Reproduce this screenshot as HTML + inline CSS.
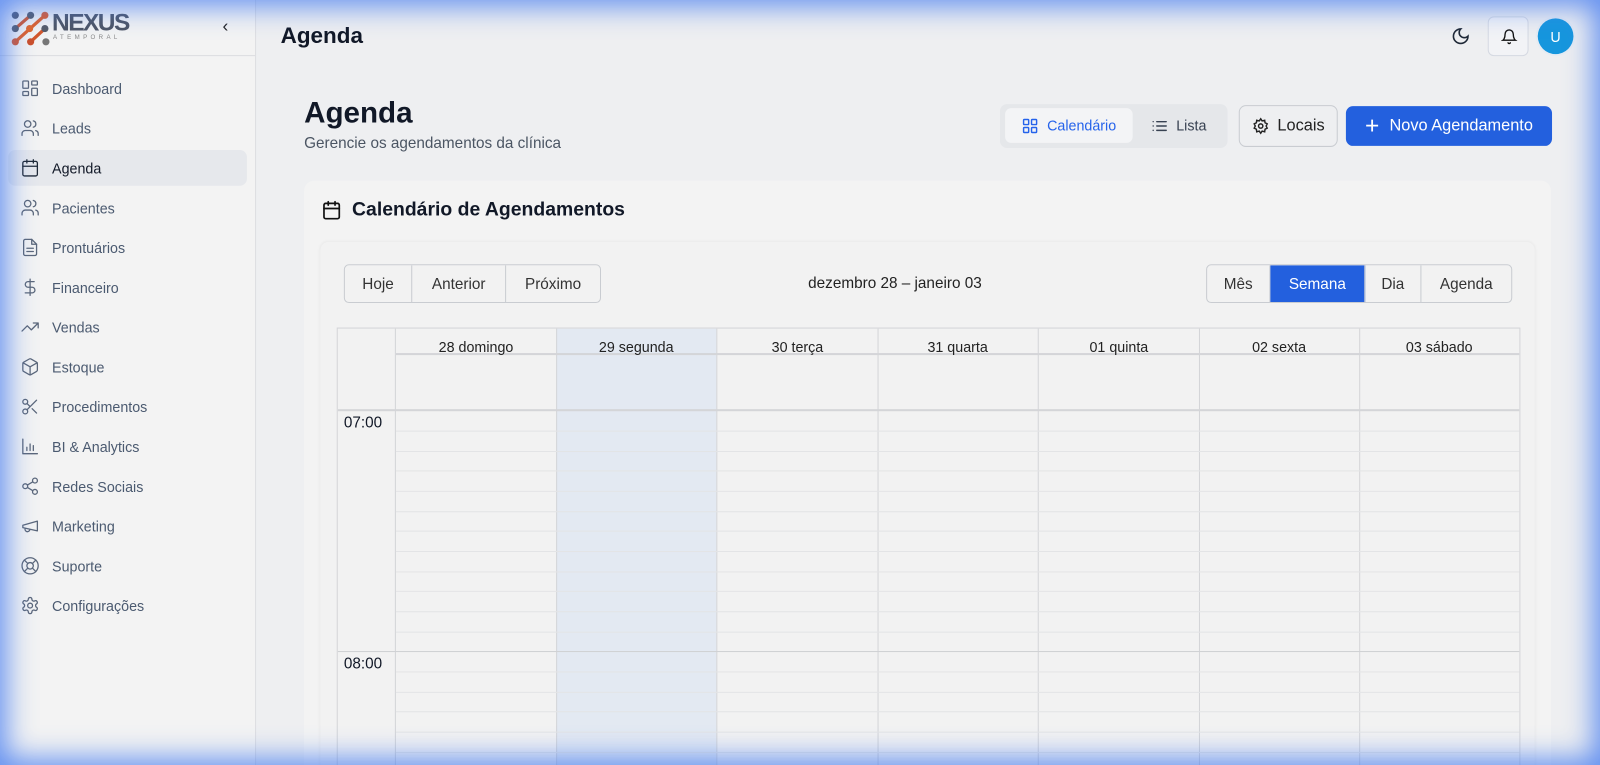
<!DOCTYPE html>
<html><head><meta charset="utf-8"><style>
*{box-sizing:border-box;margin:0;padding:0}
html{width:1600px;height:765px;overflow:hidden}
body{width:1600px;height:765px;overflow:hidden;font-family:"Liberation Sans",sans-serif;background:#eeeff1;position:relative;color:#111827}
#clip{position:absolute;left:0;top:0;width:1600px;height:765px;overflow:hidden}
#w{position:absolute;left:0;top:0;width:1568px;height:750px;transform:scale(1.0204);transform-origin:0 0;overflow:hidden}
.glow{position:absolute;inset:0;pointer-events:none;box-shadow:inset 0 0 28px 6px rgba(70,125,240,.85);z-index:50}
.sb{position:absolute;left:0;top:0;width:251px;height:750px;background:#f3f3f3;border-right:1px solid #dcdde0}
.logo{height:55px;border-bottom:1px solid #dcdde0;position:relative}
.nav{padding-top:14px}
.it{height:35px;margin:0 8px 4px;display:flex;align-items:center;padding-left:12px;font-size:14px;color:#4b5a70;border-radius:7px}
.it svg{width:19px;height:19px;margin-right:12px;stroke:#5b677a;fill:none;stroke-width:1.6;stroke-linecap:round;stroke-linejoin:round}
.it.on{background:#e6e8ec;color:#111827}
.it.on svg{stroke:#1f2937}
.top{position:absolute;left:251px;right:0;top:0;height:70px}
.btn{display:flex;align-items:center;justify-content:center}
.card{position:absolute;left:298px;top:177px;width:1222px;height:600px;background:#f3f3f3;border-radius:10px}
.inner{position:absolute;left:314px;top:237px;width:1190px;height:540px;background:#f2f2f2;border-radius:8px;box-shadow:0 0 3px rgba(0,0,0,.06)}
.grp{position:absolute;display:flex;border:1px solid #c9ccd1;border-radius:5px;overflow:hidden;height:38px;font-size:15px;color:#333}
.grp div{display:flex;align-items:center;justify-content:center;border-right:1px solid #c9ccd1}
.grp div:last-child{border-right:none}
.grid{position:absolute;left:330px;top:321px;width:1160px;height:460px;border:1px solid #d4d5d8;overflow:hidden}
.v{position:absolute;top:0;bottom:0;width:1px;background:#d4d5d8}
.h{position:absolute;left:57px;right:0;height:1px;background:#e3e4e6}
.hd{position:absolute;top:10px;font-size:14px;text-align:center;width:157px;color:#222}
</style></head><body>
<div id="clip">
<div id="w">
<div class="sb">
 <div class="logo">
  <svg width="40" height="36" style="position:absolute;left:10px;top:10px" viewBox="0 0 40 36"><g stroke-width="3.2" stroke-linecap="round"><line x1="20" y1="5" x2="5" y2="18" stroke="#d4562a"/><line x1="34" y1="5" x2="5" y2="31" stroke="#e0602a"/><line x1="34" y1="18" x2="20" y2="31" stroke="#d4562a"/></g><circle cx="5" cy="5" r="3.5" fill="#4f5563"/><circle cx="20" cy="5" r="3.5" fill="#555b67"/><circle cx="34" cy="5" r="3.5" fill="#e05a28"/><circle cx="5" cy="18" r="3.5" fill="#555b67"/><circle cx="19" cy="18" r="3.5" fill="#e3672a"/><circle cx="34" cy="18" r="3.5" fill="#555b67"/><circle cx="5" cy="31" r="3.5" fill="#d9552a"/><circle cx="20" cy="31" r="3.5" fill="#cc4f2a"/><circle cx="35" cy="31" r="3.5" fill="#777"/></svg>
  <div style="position:absolute;left:51px;top:9px;font-size:24px;font-weight:bold;color:#4e5564;letter-spacing:-1.5px">NEXUS</div>
  <div style="position:absolute;left:52px;top:34px;font-size:6px;color:#888;letter-spacing:3.3px">ATEMPORAL</div>
  <div style="position:absolute;left:218px;top:16px;font-size:17px;color:#222">‹</div>
 </div>
 <div class="nav">
  <div class="it"><svg viewBox="0 0 24 24"><rect x="3" y="3" width="7" height="9" rx="1"/><rect x="14" y="3" width="7" height="5" rx="1"/><rect x="14" y="12" width="7" height="9" rx="1"/><rect x="3" y="16" width="7" height="5" rx="1"/></svg>Dashboard</div>
  <div class="it"><svg viewBox="0 0 24 24"><path d="M16 21v-2a4 4 0 0 0-4-4H6a4 4 0 0 0-4 4v2"/><circle cx="9" cy="7" r="4"/><path d="M22 21v-2a4 4 0 0 0-3-3.9M16 3.1a4 4 0 0 1 0 7.8"/></svg>Leads</div>
  <div class="it on"><svg viewBox="0 0 24 24"><rect x="3" y="4" width="18" height="18" rx="2"/><path d="M16 2v4M8 2v4M3 10h18"/></svg>Agenda</div>
  <div class="it"><svg viewBox="0 0 24 24"><path d="M16 21v-2a4 4 0 0 0-4-4H6a4 4 0 0 0-4 4v2"/><circle cx="9" cy="7" r="4"/><path d="M22 21v-2a4 4 0 0 0-3-3.9M16 3.1a4 4 0 0 1 0 7.8"/></svg>Pacientes</div>
  <div class="it"><svg viewBox="0 0 24 24"><path d="M14 2H6a2 2 0 0 0-2 2v16a2 2 0 0 0 2 2h12a2 2 0 0 0 2-2V8z"/><path d="M14 2v6h6M16 13H8M16 17H8"/></svg>Prontuários</div>
  <div class="it"><svg viewBox="0 0 24 24"><path d="M12 2v20M17 5H9.5a3.5 3.5 0 0 0 0 7h5a3.5 3.5 0 0 1 0 7H6"/></svg>Financeiro</div>
  <div class="it"><svg viewBox="0 0 24 24"><path d="M22 7l-8.5 8.5-5-5L2 17M16 7h6v6"/></svg>Vendas</div>
  <div class="it"><svg viewBox="0 0 24 24"><path d="M21 16V8a2 2 0 0 0-1-1.7l-7-4a2 2 0 0 0-2 0l-7 4A2 2 0 0 0 3 8v8a2 2 0 0 0 1 1.7l7 4a2 2 0 0 0 2 0l7-4a2 2 0 0 0 1-1.7z"/><path d="M3.3 7L12 12l8.7-5M12 22V12"/></svg>Estoque</div>
  <div class="it"><svg viewBox="0 0 24 24"><circle cx="6" cy="6" r="3"/><circle cx="6" cy="18" r="3"/><path d="M20 4L8.1 15.9M14.5 14.5L20 20M8.1 8.1L12 12"/></svg>Procedimentos</div>
  <div class="it"><svg viewBox="0 0 24 24"><path d="M3 3v18h18M8 17v-4M12 17V9M16 17v-6"/></svg>BI &amp; Analytics</div>
  <div class="it"><svg viewBox="0 0 24 24"><circle cx="18" cy="5" r="3"/><circle cx="6" cy="12" r="3"/><circle cx="18" cy="19" r="3"/><path d="M8.6 13.5l6.8 4M15.4 6.5l-6.8 4"/></svg>Redes Sociais</div>
  <div class="it"><svg viewBox="0 0 24 24"><path d="M3 11l18-5v12L3 14v-3zM11.6 16.8a3 3 0 1 1-5.8-1.6"/></svg>Marketing</div>
  <div class="it"><svg viewBox="0 0 24 24"><circle cx="12" cy="12" r="10"/><circle cx="12" cy="12" r="4"/><path d="M4.9 4.9l4.3 4.3M14.8 14.8l4.3 4.3M14.8 9.2l4.3-4.3M4.9 19.1l4.3-4.3"/></svg>Suporte</div>
  <div class="it"><svg viewBox="0 0 24 24"><circle cx="12" cy="12" r="3"/><path d="M12.2 2h-.4a2 2 0 0 0-2 2v.2a2 2 0 0 1-1 1.7l-.4.3a2 2 0 0 1-2 0l-.2-.1a2 2 0 0 0-2.7.7l-.2.4a2 2 0 0 0 .7 2.7l.2.1a2 2 0 0 1 1 1.7v.5a2 2 0 0 1-1 1.7l-.2.1a2 2 0 0 0-.7 2.7l.2.4a2 2 0 0 0 2.7.7l.2-.1a2 2 0 0 1 2 0l.4.3a2 2 0 0 1 1 1.7v.2a2 2 0 0 0 2 2h.4a2 2 0 0 0 2-2v-.2a2 2 0 0 1 1-1.7l.4-.3a2 2 0 0 1 2 0l.2.1a2 2 0 0 0 2.7-.7l.2-.4a2 2 0 0 0-.7-2.7l-.2-.1a2 2 0 0 1-1-1.7v-.5a2 2 0 0 1 1-1.7l.2-.1a2 2 0 0 0 .7-2.7l-.2-.4a2 2 0 0 0-2.7-.7l-.2.1a2 2 0 0 1-2 0l-.4-.3a2 2 0 0 1-1-1.7V4a2 2 0 0 0-2-2z"/></svg>Configurações</div>
 </div>
</div>
<div class="top">
 <div style="position:absolute;left:24px;top:22px;font-size:22px;font-weight:bold">Agenda</div>
 <svg style="position:absolute;left:1171px;top:26px" width="19" height="19" viewBox="0 0 24 24" fill="none" stroke="#1f2937" stroke-width="2" stroke-linecap="round"><path d="M12 3a6 6 0 0 0 9 9 9 9 0 1 1-9-9z"/></svg>
 <div style="position:absolute;left:1207px;top:16px;width:40px;height:39px;border:1px solid #d5d9e2;border-radius:6px;background:#f2f3f6"><svg style="position:absolute;left:12px;top:11px" width="16" height="16" viewBox="0 0 24 24" fill="none" stroke="#111" stroke-width="2" stroke-linecap="round"><path d="M6 8a6 6 0 0 1 12 0c0 7 3 9 3 9H3s3-2 3-9M10.3 21a1.9 1.9 0 0 0 3.4 0"/></svg></div>
 <div style="position:absolute;left:1256px;top:18px;width:35px;height:35px;border-radius:50%;background:#1696dd;color:#fff;font-size:14px;display:flex;align-items:center;justify-content:center;box-shadow:0 0 0 2px #e6ecf3">U</div>
</div>
<div style="position:absolute;left:298px;top:95px;font-size:29px;font-weight:bold">Agenda</div>
<div style="position:absolute;left:298px;top:132px;font-size:15px;color:#4b5563">Gerencie os agendamentos da clínica</div>
<div style="position:absolute;left:980px;top:102px;width:223px;height:43px;background:#e5e7ea;border-radius:7px"></div>
<div class="btn" style="position:absolute;left:985px;top:106px;width:125px;height:34px;background:#f3f4f6;border-radius:6px;color:#2563eb;font-size:14px"><svg width="17" height="17" viewBox="0 0 24 24" fill="none" stroke="#2563eb" stroke-width="2" style="margin-right:8px"><rect x="3" y="3" width="7" height="7" rx="1"/><rect x="14" y="3" width="7" height="7" rx="1"/><rect x="3" y="14" width="7" height="7" rx="1"/><rect x="14" y="14" width="7" height="7" rx="1"/></svg>Calendário</div>
<div class="btn" style="position:absolute;left:1115px;top:106px;width:80px;height:34px;color:#374151;font-size:14px"><svg width="17" height="17" viewBox="0 0 24 24" fill="none" stroke="#374151" stroke-width="2" stroke-linecap="round" style="margin-right:8px"><path d="M8 6h13M8 12h13M8 18h13M3 6h.01M3 12h.01M3 18h.01"/></svg>Lista</div>
<div class="btn" style="position:absolute;left:1214px;top:103px;width:97px;height:41px;border:1px solid #c9ccd1;border-radius:7px;font-size:16px;color:#222"><svg width="17" height="17" viewBox="0 0 24 24" fill="none" stroke="#222" stroke-width="2" style="margin-right:8px"><circle cx="12" cy="12" r="3"/><path d="M12 2l2 3 3.5-1 .5 3.5L21 9l-1.5 3 1.5 3-3 1.5-.5 3.5-3.5-1-2 3-2-3-3.5 1-.5-3.5L3 15l1.5-3L3 9l3-1.5.5-3.5 3.5 1z"/></svg>Locais</div>
<div class="btn" style="position:absolute;left:1319px;top:104px;width:202px;height:39px;background:#2360de;border-radius:7px;color:#fff;font-size:16px"><span style="font-size:24px;margin-right:10px;font-weight:300;line-height:1">+</span>Novo Agendamento</div>
<div class="card"></div>
<svg style="position:absolute;left:315px;top:196px" width="20" height="20" viewBox="0 0 24 24" fill="none" stroke="#111" stroke-width="2" stroke-linecap="round"><rect x="3" y="4" width="18" height="18" rx="2"/><path d="M16 2v4M8 2v4M3 10h18"/></svg>
<div style="position:absolute;left:345px;top:195px;font-size:19px;font-weight:bold">Calendário de Agendamentos</div>
<div class="inner"></div>
<div class="grp" style="left:337px;top:259px"><div style="width:66px">Hoje</div><div style="width:92px">Anterior</div><div style="width:92px">Próximo</div></div>
<div style="position:absolute;left:792px;top:269px;font-size:15px;color:#222">dezembro 28 – janeiro 03</div>
<div class="grp" style="left:1182px;top:259px"><div style="width:62px">Mês</div><div style="width:93px;background:#2360de;color:#fff">Semana</div><div style="width:55px">Dia</div><div style="width:88px">Agenda</div></div>
<div class="grid">
 <div style="position:absolute;left:214px;top:0;width:157px;bottom:0;background:#e3e9f2"></div>
 <div style="position:absolute;left:57px;right:0;top:24px;height:2px;background:#d4d5d8"></div>
 <div style="position:absolute;left:0;right:0;top:79px;height:2px;background:#d4d5d8"></div>
 <div class="hd" style="left:57px">28 domingo</div>
 <div class="hd" style="left:214px">29 segunda</div>
 <div class="hd" style="left:372px">30 terça</div>
 <div class="hd" style="left:529px">31 quarta</div>
 <div class="hd" style="left:687px">01 quinta</div>
 <div class="hd" style="left:844px">02 sexta</div>
 <div class="hd" style="left:1001px">03 sábado</div>
 <div class="v" style="left:56px"></div><div class="v" style="left:214px"></div><div class="v" style="left:371px"></div><div class="v" style="left:529px"></div><div class="v" style="left:686px"></div><div class="v" style="left:844px"></div><div class="v" style="left:1001px"></div>
 <div class="h" style="top:100px"></div><div class="h" style="top:120px"></div><div class="h" style="top:139px"></div><div class="h" style="top:159px"></div><div class="h" style="top:179px"></div><div class="h" style="top:198px"></div><div class="h" style="top:218px"></div><div class="h" style="top:238px"></div><div class="h" style="top:257px"></div><div class="h" style="top:277px"></div><div class="h" style="top:297px"></div>
 <div style="position:absolute;left:0;right:0;top:316px;height:1px;background:#d0d1d4"></div>
 <div class="h" style="top:336px"></div><div class="h" style="top:356px"></div><div class="h" style="top:375px"></div><div class="h" style="top:395px"></div><div class="h" style="top:415px"></div><div class="h" style="top:434px"></div>
 <div style="position:absolute;left:6px;top:84px;font-size:15px">07:00</div>
 <div style="position:absolute;left:6px;top:320px;font-size:15px">08:00</div>
</div>
</div>
</div>
<div class="glow"></div>
</body></html>
